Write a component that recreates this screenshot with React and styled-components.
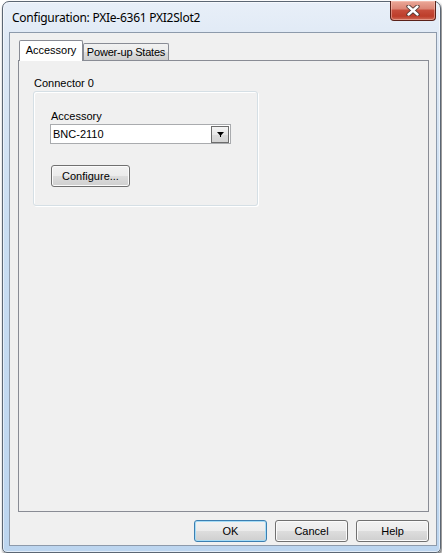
import React from "react";
import styled, { createGlobalStyle } from "styled-components";

const GlobalStyle = createGlobalStyle`
  html, body { margin: 0; padding: 0; background: #ffffff; }
  body {
    font-family: "Liberation Sans", Arial, sans-serif;
    font-size: 11px;
    color: #000;
  }
  * { box-sizing: border-box; }
`;

const Window = styled.div`
  margin: 1px 0 0 2px;
  width: 439px;
  height: 552px;
  border: 1px solid #5b6673;
  border-radius: 7px 7px 5px 5px;
  background: linear-gradient(
    to bottom,
    #e8eff8 0px,
    #dfe9f5 40px,
    #cadef2 220px,
    #bcd5ef 100%
  );
  box-shadow: inset 0 0 0 1px rgba(255, 255, 255, 0.55),
    1px 2px 3px rgba(0, 0, 0, 0.6);
  display: flex;
  flex-direction: column;
  padding: 0 3px 6px 6px;
`;

const TitleBar = styled.div`
  height: 30px;
  display: flex;
  justify-content: space-between;
  align-items: flex-start;
`;

const TitleText = styled.div`
  font-family: "Noto Sans", "Open Sans", sans-serif;
  font-size: 12px;
  line-height: 15px;
  padding: 8px 0 0 3px;
  color: #000;
  letter-spacing: -0.25px;
`;

const CloseButton = styled.div`
  width: 46px;
  height: 20px;
  margin: -1px 1px 0 0;
  border: 1px solid #5a2119;
  border-top: none;
  border-radius: 0 0 4px 4px;
  background: linear-gradient(
    to bottom,
    #eba898 0%,
    #dc8676 40%,
    #c64c3a 50%,
    #bd3d2a 80%,
    #cf6a57 100%
  );
  box-shadow: inset 0 0 0 1px rgba(255, 210, 200, 0.45);
  display: flex;
  align-items: center;
  justify-content: center;
`;

const Client = styled.div`
  flex: 1;
  border: 1px solid #8d9aab;
  background: #f0f0f0;
  display: flex;
  flex-direction: column;
  padding: 7px 7px 3px 8px;
`;

const TabStrip = styled.div`
  height: 20px;
  display: flex;
  align-items: flex-end;
  padding-left: 1px;
`;

const Tab = styled.div`
  position: relative;
  width: ${(p) => p.$w}px;
  height: ${(p) => (p.$active ? 21 : 17)}px;
  margin-bottom: ${(p) => (p.$active ? -1 : 0)}px;
  z-index: ${(p) => (p.$active ? 1 : 0)};
  border: 1px solid #898c95;
  border-bottom: none;
  border-radius: 2px 2px 0 0;
  background: ${(p) =>
    p.$active
      ? "#ffffff"
      : "linear-gradient(to bottom, #f2f2f2 0%, #ebebeb 50%, #dddddd 51%, #cfcfcf 100%)"};
  display: flex;
  justify-content: center;
  align-items: center;
  line-height: 13px;
  letter-spacing: ${(p) => (p.$active ? 0 : -0.2)}px;
  padding-bottom: ${(p) => (p.$active ? 2 : 0)}px;
`;

const Panel = styled.div`
  flex: 1;
  border: 1px solid #898c95;
  background: #f0f0f0;
  padding: 16px 14px;
  display: flex;
  flex-direction: column;
  align-items: flex-start;
`;

const Label = styled.div`
  line-height: 13px;
  margin-bottom: ${(p) => p.$mb || 0}px;
  margin-left: ${(p) => p.$ml || 0}px;
`;

const GroupBox = styled.div`
  width: 225px;
  border: 1px solid #d5dfe5;
  border-radius: 3px;
  box-shadow: inset 1px 1px 0 #ffffff, 1px 1px 0 #ffffff;
  padding: 18px 0 18px 17px;
  display: flex;
  flex-direction: column;
  align-items: flex-start;
`;

const Combo = styled.div`
  width: 181px;
  height: 20px;
  margin-left: -1px;
  border: 1px solid #a9abae;
  background: #ffffff;
  display: flex;
  align-items: flex-start;
  justify-content: space-between;
`;

const ComboText = styled.div`
  padding-left: 2px;
  line-height: 18px;
`;

const DropButton = styled.div`
  width: 18px;
  height: 17px;
  margin: 1px 1px 0 0;
  border: 1px solid #6d6d6d;
  background: linear-gradient(to bottom, #f4f4f4 0%, #e8e8e8 50%, #dcdcdc 51%, #d4d4d4 100%);
  display: flex;
  align-items: center;
  justify-content: center;
`;

const Button = styled.div`
  width: ${(p) => p.$w}px;
  height: 22px;
  margin-top: ${(p) => p.$mt || 0}px;
  border: 1px solid ${(p) => (p.$default ? "#3c7fb1" : "#707070")};
  border-radius: 3px;
  background: linear-gradient(
    to bottom,
    #f2f2f2 0%,
    #ebebeb 50%,
    #dddddd 51%,
    #cfcfcf 100%
  );
  box-shadow: inset 0 0 0 1px ${(p) => (p.$default ? "#a6dcf6" : "#fbfbfb")};
  display: flex;
  align-items: center;
  justify-content: center;
  line-height: 13px;
`;

const ButtonRow = styled.div`
  display: flex;
  justify-content: flex-end;
  gap: 8px;
  margin-top: 8px;
`;

export default function App() {
  return (
    <>
      <GlobalStyle />
      <Window>
        <TitleBar>
          <TitleText>Configuration: PXIe-6361 PXI2Slot2</TitleText>
          <CloseButton>
            <svg width="14" height="11" viewBox="0 0 14 11">
              <path
                d="M2.5 1.5 L11.5 9.5 M11.5 1.5 L2.5 9.5"
                stroke="#4a3430"
                strokeWidth="4.2"
                strokeLinecap="round"
                fill="none"
              />
              <path
                d="M2.5 1.5 L11.5 9.5 M11.5 1.5 L2.5 9.5"
                stroke="#ffffff"
                strokeWidth="2.4"
                strokeLinecap="round"
                fill="none"
              />
            </svg>
          </CloseButton>
        </TitleBar>
        <Client>
          <TabStrip>
            <Tab $active $w={64}>Accessory</Tab>
            <Tab $w={86}>Power-up States</Tab>
          </TabStrip>
          <Panel>
            <Label $mb={1} $ml={1}>Connector 0</Label>
            <GroupBox>
              <Label $mb={1}>Accessory</Label>
              <Combo>
                <ComboText>BNC-2110</ComboText>
                <DropButton>
                  <svg width="7" height="5" viewBox="0 0 7 5">
                    <path d="M0 0 H7 L3.5 4 Z" fill="#000" />
                    <rect x="3" y="3" width="1" height="2" fill="#000" />
                  </svg>
                </DropButton>
              </Combo>
              <Button $w={79} $mt={21}>Configure...</Button>
            </GroupBox>
          </Panel>
          <ButtonRow>
            <Button $w={73} $default>OK</Button>
            <Button $w={73}>Cancel</Button>
            <Button $w={73}>Help</Button>
          </ButtonRow>
        </Client>
      </Window>
    </>
  );
}
